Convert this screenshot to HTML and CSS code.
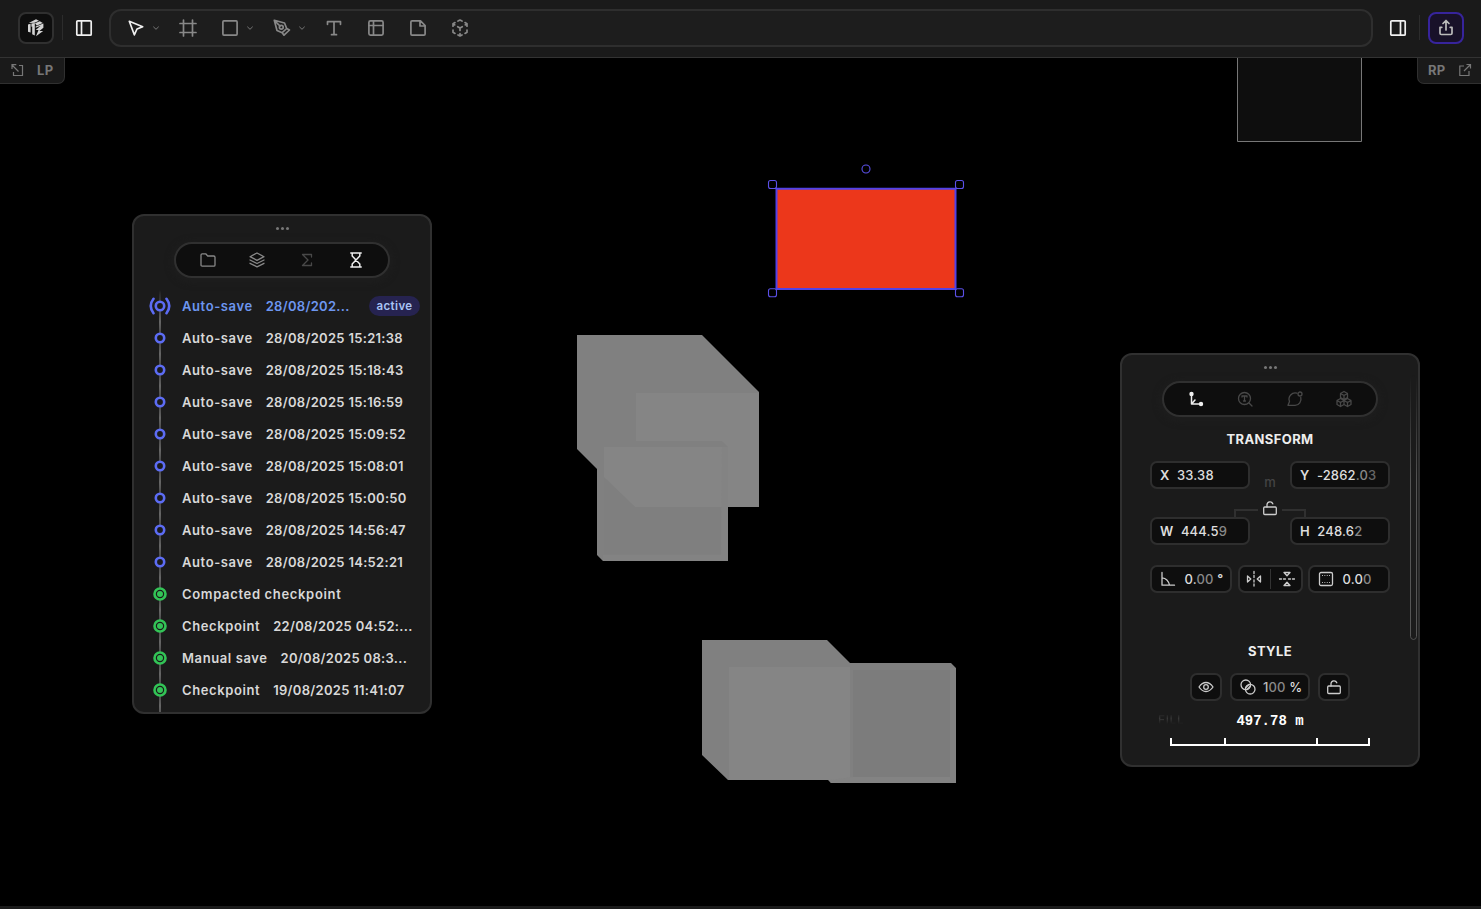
FILE: index.html
```
<!DOCTYPE html>
<html lang="en">
<head>
<meta charset="utf-8">
<title>Design editor</title>
<link rel="stylesheet" href="styles.css">
</head>
<body>
<header class="topbar">
  <button class="logo"><svg width="20" height="20" viewBox="0 0 20 20"><path fill="#d4d4d4" d="M2 6.500 4.600 5.800V14.500L2 13.800zM5.400 5.600 8.800 5v12.400L6.200 16.200V8.500l-.8.200zM2.800 5 10 1.300l3 1.500-4.500 2zM9 5.300l4.800-2.100L16.800 5l-6 2.400zM9.700 8.600l7.700-3v4.200L13.400 13h3.800l-7.200 5.300 2.500-6.300H9.700l5-4.200-5 2z"/></svg></button>
  <i class="rule"></i>
  <button class="toggle"><svg class="ic bright" width="20" height="20" viewBox="0 0 20 20"><rect x="2.800" y="2.800" width="14.400" height="14.400" rx="1"/><path d="M7.500 3v14"/></svg></button>
  <nav class="tools">
    <svg class="ic bright" width="20" height="20" viewBox="0 0 20 20"><path d="m3.300 3.300 13.400 5.400-5.700 2.300-2.700 5.800z"/></svg>
    <svg class="chev" viewBox="0 0 8 8"><path d="m1.300 2.700 2.700 2.600 2.700-2.600"/></svg>
    <svg class="ic frame" width="20" height="20" viewBox="0 0 20 20"><path d="M5.500 2v16M14.500 2v16M2 5.500h16M2 14.500h16"/></svg>
    <svg class="ic" width="20" height="20" viewBox="0 0 20 20"><rect x="2.900" y="2.900" width="14.200" height="14.200" rx="1"/></svg>
    <svg class="chev" viewBox="0 0 8 8"><path d="m1.300 2.700 2.700 2.600 2.700-2.600"/></svg>
    <svg class="ic" width="20" height="20" viewBox="0 0 20 20"><path d="M2.300 2.300 12.500 5l2.200 5.500-4.500 4.200L5 12.500zM2.300 2.300 8 8M10.200 14.700l1.800 2.500 5.500-5.200-2.800-1.500"/><circle cx="9.300" cy="9.300" r="1.900"/></svg>
    <svg class="chev" viewBox="0 0 8 8"><path d="m1.300 2.700 2.700 2.600 2.700-2.600"/></svg>
    <svg class="ic" width="20" height="20" viewBox="0 0 20 20"><path d="M3.500 6.300V3.700h13v2.600M10 3.700v13M7.500 16.700h5"/></svg>
    <svg class="ic" width="20" height="20" viewBox="0 0 20 20"><rect x="2.900" y="2.900" width="14.200" height="14.200" rx="1.500"/><path d="M7.500 3v14M3 7.500h14"/></svg>
    <svg class="ic" width="20" height="20" viewBox="0 0 20 20"><path d="M4 2.900h8.500L17.100 7.500V16q0 1.100-1.100 1.100H4q-1.100 0-1.100-1.100V4q0-1.100 1.100-1.100zM12 3v5h5"/></svg>
    <svg class="ic" width="20" height="20" viewBox="0 0 20 20"><path d="M8 3 10 2l2 1M15 4.600 17 5.800v2.400M17 12v2.200l-2 1.200M12 17l-2 1-2-1M5 15.400l-2-1.200V12M3 8.200V5.800l2-1.200M7.700 8.700 10 10l2.300-1.300M10 10v2.500M10 15.500V18M3 5.800l1.800 1.100M17 5.800l-1.800 1.100"/></svg>
  </nav>
  <button class="toggle"><svg class="ic bright" width="20" height="20" viewBox="0 0 20 20"><rect x="2.800" y="2.800" width="14.400" height="14.400" rx="1"/><path d="M12.500 3v14"/></svg></button>
  <i class="rule"></i>
  <button class="logo share"><svg class="ic" width="20" height="20" viewBox="0 0 20 20"><path d="M10 12V3.200M7 5.500l3-3 3 3M5.800 9.300H4v5.900q0 1.300 1.300 1.300h9.400q1.300 0 1.300-1.300V9.300h-1.800"/></svg></button>
</header>
<main class="stage">
  <svg class="canvas" width="1481" height="851" viewBox="0 58 1481 851">
    <path fill="#0e0e0e" stroke="#777" d="M1237.500 50v91.500h124V50"/>
    <g>
      <path fill="#808080" d="M577 335h125l57 57v115h-31v54H603l-6-6v-86l-20-20z"/>
      <path fill="#858585" d="M636 393h123v114h-31v-60l-6-6h-86z"/>
      <path fill="#858585" d="M604 447h118v60h-87l-31-30z"/>
      <path fill="#7f7f7f" d="M604 478l31 29h86v47H604z"/>
      <path fill="#838383" d="M722 447h6v114H603v-6h118z"/>
    </g>
    <g>
      <path fill="#808080" d="M702 640h125l23 23h101l5 5v115H831l-3-3H728l-26-25z"/>
      <path fill="#858585" d="M729 667h121v113H729z"/>
      <path fill="#7c7c7c" d="M853 670h97v107h-97z"/>
      <path fill="#838383" d="M950 668h6v115H831l-2-3 24-3h97z"/>
    </g>
    <path fill="#ec371b" stroke="#5142e8" stroke-width="2" d="M776.500 188.800h179v100.200h-179z"/>
    <g fill="none" stroke="#5b50e8" stroke-width="1.100"><rect x="768.500" y="180.500" width="8" height="8" rx="2"/><rect x="955.500" y="180.500" width="8" height="8" rx="2"/><rect x="768.500" y="288.800" width="8" height="8" rx="2"/><rect x="955.500" y="288.800" width="8" height="8" rx="2"/><circle cx="866" cy="169" r="4"/></g>
  </svg>
  <div class="tab lp"><svg class="tic" viewBox="0 0 14 14"><path d="M2 6V1.700h4.300M2 2l6.500 6.500M9 2.500h3.500v10h-9V9"/></svg><span>LP</span></div>
  <div class="tab rp"><span>RP</span><svg class="tic" viewBox="0 0 14 14"><path d="M8.500 1.500h4v4M12.500 1.500 6 8M6 3H1.800v9.500H11V8"/></svg></div>

  <section class="panel history">
    <div class="grip"><i></i><i></i><i></i></div>
    <div class="pill">
      <svg class="pic" viewBox="0 0 18 18"><path d="M2 4q0-1.200 1.200-1.200h3.500l2 2.200h6Q16 5 16 6.200V14q0 1.200-1.200 1.200H3.200Q2 15.200 2 14z"/></svg>
      <svg class="pic" viewBox="0 0 18 18"><path d="m9 2 7 3.700-7 3.600-7-3.600zM2 9l7 3.500L16 9M2 12.300l7 3.500 7-3.500"/></svg>
      <svg class="pic off" viewBox="0 0 18 18"><path d="M13.500 6V3.500h-9L10 9l-5.500 5.500h9V12"/></svg>
      <svg class="pic on" viewBox="0 0 18 18"><path d="M3.800 2h10.400M3.800 16h10.400M5.200 2v3l7.600 8v3M12.800 2v3l-7.600 8v3"/></svg>
    </div>
    <ul class="log">
      <li class="cur"><svg class="dot" viewBox="0 0 24 24"><circle cx="12" cy="12" r="4.200"/><path d="M5.500 4.800q-5.500 7.200 0 14.400M18.500 4.800q5.500 7.200 0 14.400"/></svg><b>Auto-save</b><time class="cut">28/08/202...</time><em>active</em></li>
      <li><svg class="dot" viewBox="0 0 24 24"><circle cx="12" cy="12" r="4.200"/></svg><b>Auto-save</b><time>28/08/2025 15:21:38</time></li>
      <li><svg class="dot" viewBox="0 0 24 24"><circle cx="12" cy="12" r="4.200"/></svg><b>Auto-save</b><time>28/08/2025 15:18:43</time></li>
      <li><svg class="dot" viewBox="0 0 24 24"><circle cx="12" cy="12" r="4.200"/></svg><b>Auto-save</b><time>28/08/2025 15:16:59</time></li>
      <li><svg class="dot" viewBox="0 0 24 24"><circle cx="12" cy="12" r="4.200"/></svg><b>Auto-save</b><time>28/08/2025 15:09:52</time></li>
      <li><svg class="dot" viewBox="0 0 24 24"><circle cx="12" cy="12" r="4.200"/></svg><b>Auto-save</b><time>28/08/2025 15:08:01</time></li>
      <li><svg class="dot" viewBox="0 0 24 24"><circle cx="12" cy="12" r="4.200"/></svg><b>Auto-save</b><time>28/08/2025 15:00:50</time></li>
      <li><svg class="dot" viewBox="0 0 24 24"><circle cx="12" cy="12" r="4.200"/></svg><b>Auto-save</b><time>28/08/2025 14:56:47</time></li>
      <li><svg class="dot" viewBox="0 0 24 24"><circle cx="12" cy="12" r="4.200"/></svg><b>Auto-save</b><time>28/08/2025 14:52:21</time></li>
      <li class="saved"><svg class="dot" viewBox="0 0 24 24"><circle cx="12" cy="12" r="5.500"/><circle class="core" cx="12" cy="12" r="3"/></svg><b class="wide">Compacted checkpoint</b></li>
      <li class="saved"><svg class="dot" viewBox="0 0 24 24"><circle cx="12" cy="12" r="5.500"/><circle class="core" cx="12" cy="12" r="3"/></svg><b>Checkpoint</b><time>22/08/2025 04:52:...</time></li>
      <li class="saved"><svg class="dot" viewBox="0 0 24 24"><circle cx="12" cy="12" r="5.500"/><circle class="core" cx="12" cy="12" r="3"/></svg><b>Manual save</b><time>20/08/2025 08:3...</time></li>
      <li class="saved"><svg class="dot" viewBox="0 0 24 24"><circle cx="12" cy="12" r="5.500"/><circle class="core" cx="12" cy="12" r="3"/></svg><b>Checkpoint</b><time>19/08/2025 11:41:07</time></li>
    </ul>
  </section>

  <section class="panel props">
    <div class="grip"><i></i><i></i><i></i></div>
    <div class="pill">
      <svg class="pic on" viewBox="0 0 18 18"><path d="M4.500 4v10H14M4.500 14 8 10"/><path class="solid" d="M4.500 1.800a2.200 2.200 0 1 1 0 4.400 2.200 2.200 0 0 1 0-4.400zM14 11.800a2.200 2.200 0 1 1 0 4.400 2.200 2.200 0 0 1 0-4.400z"/></svg>
      <svg class="pic off" viewBox="0 0 18 18"><circle cx="8.500" cy="8.500" r="6"/><path d="m13 13 3 3M6 7V6h5v1M8.500 6v5M7.500 11h2"/></svg>
      <svg class="pic off" viewBox="0 0 18 18"><path d="M11 3.200A6.200 6.200 0 0 0 3.500 11.500L2 15.300H9A6.200 6.200 0 0 0 14.800 7.500"/><circle cx="14" cy="4" r="2"/></svg>
      <svg class="pic off" viewBox="0 0 18 18"><path d="m9 1.500 3.500 2v4L9 9.500l-3.500-2v-4zM5.500 8.500l3.500 2v4l-3.500 2-3.500-2v-4zM12.500 8.500l3.500 2v4l-3.500 2-3.500-2v-4zM5.500 3.500 9 5.500l3.500-2M9 5.500v4M2 10.500l3.500 2 3.500-2M5.500 12.500v4M9 10.500l3.500 2 3.500-2M12.500 12.500v4"/></svg>
    </div>
    <h2>TRANSFORM</h2>
    <div class="row pos"><label class="field"><b>X</b><span>33.38</span></label><span class="unit">m</span><label class="field"><b>Y</b><span>-2862<s>.0</s><s class="dim">3</s></span></label></div>
    <div class="link"><i class="l"></i><svg class="pic lock" viewBox="0 0 18 18"><rect x="2.700" y="8" width="12.600" height="7.500" rx="1"/><path d="M6 8V5.500a3 3 0 0 1 5.800-.7"/></svg><i class="r"></i></div>
    <div class="row"><label class="field"><b>W</b><span>444.5<s>9</s></span></label><label class="field"><b>H</b><span>248.6<s>2</s></span></label></div>
    <div class="row third">
      <label class="field sm"><svg class="pic lit" viewBox="0 0 18 18"><path d="M3 2.500v12.700h12.500M3 7.800q6 .5 7.500 7.400"/></svg><span>0.<s>00</s> <b>°</b></span></label>
      <div class="field flip"><svg class="pic lit" viewBox="0 0 18 18"><path d="M9 1.500v2M9 5.500v2M9 10v2M9 14v2M2.500 6v6l3.300-3zM15.500 6v6l-3.300-3z"/></svg><i></i><svg class="pic lit" viewBox="0 0 18 18"><path d="M1.500 9h2M5.500 9h2M10.500 9h2M14.500 9h2M6 2.500h6L9 5.800zM6 15.500h6l-3-3.300z"/></svg></div>
      <label class="field sm"><svg class="pic lit" viewBox="0 0 18 18"><rect x="2.500" y="2.500" width="13" height="13" rx="1.500"/><path stroke-width="1" d="M5.500 5.500h.1M7.800 5.500h.1M10.200 5.500h.1M12.500 5.500h.1M5.500 12.500h.1M7.800 12.500h.1M10.200 12.500h.1M12.500 12.500h.1"/></svg><span>0.0<s>0</s></span></label>
    </div>
    <h2 class="style">STYLE</h2>
    <div class="row styles">
      <div class="field box"><svg class="pic lit" viewBox="0 0 18 18"><path d="M2 9q3-4.500 7-4.500T16 9q-3 4.500-7 4.500T2 9z"/><circle cx="9" cy="9" r="2.300"/></svg></div>
      <div class="field opacity"><svg class="pic lit" viewBox="0 0 18 18"><circle cx="6.800" cy="6.800" r="4.800"/><circle cx="11.200" cy="11.200" r="4.800"/><path d="m6.500 10 3.500-3.500M8 11.500 11.500 8"/></svg><span><s class="mid">1</s><s>00</s> %</span></div>
      <div class="field box"><svg class="pic lit" viewBox="0 0 18 18"><rect x="2.700" y="8" width="12.600" height="7.500" rx="1"/><path d="M6 8V5.500a3 3 0 0 1 5.800-.7"/></svg></div>
    </div>
    <div class="foot"><span class="fill">FILL</span><span class="scale">497.78 m</span></div>
    <div class="ruler"><i></i><i></i><i></i></div>
    <i class="scroll"></i>
  </section>
</main>
</body>
</html>
```
FILE: styles.css
```
* { box-sizing: border-box; }
body { margin: 0; width: 1481px; height: 909px; overflow: hidden; background: #000; color: #ddd; font: 500 13px/16px Inter, sans-serif; display: flex; flex-direction: column; }
button { padding: 0; border: 0; background: none; display: flex; align-items: center; justify-content: center; }
svg { flex: none; display: block; }
.topbar { height: 58px; padding: 0 17px 2px 18px; background: #1a1a1a; border-bottom: 1px solid #333; display: flex; align-items: center; flex: none; }
.logo { width: 36px; height: 32px; border: 2px solid #303030; border-radius: 8px; background: #0e0e0e; }
.share { background: #181129; border-color: #37249c; }
.share .ic { stroke: #bbb; }
.rule { width: 1px; height: 25px; background: #2c2c2c; margin: 0 3px 0 8px; }
.toggle { width: 36px; height: 32px; margin: 0 7px 0 0; }
.tools { flex: 1; height: 38px; padding-left: 15px; border: 2px solid #2e2e2e; border-radius: 12px; background: #1d1d1d; display: flex; align-items: center; gap: 22px; }
.tools + .toggle { margin: 0 3px 0 7px; }
.toggle + .rule { margin: 0 8px 0 0; }
.ic { fill: none; stroke: #888; stroke-width: 1.700; stroke-linejoin: round; stroke-linecap: round; }
.bright { stroke: #f0f0f0; }
.chev { width: 8px; height: 8px; margin: 0 -4px 0 -16px; fill: none; stroke: #777; }
.stage { flex: 1; position: relative; border-bottom: 3px solid #1b1b1b; }
.canvas { position: absolute; inset: 0; }
.tab { position: absolute; top: 0; height: 26px; padding-bottom: 1px; background: #1a1a1a; border: 1px solid #303030; border-top: 0; display: flex; align-items: center; font-weight: 700; letter-spacing: .3px; color: #777; }
.lp { left: 0; width: 65px; border-left: 0; border-radius: 0 0 7px 0; padding-left: 10px; gap: 13px; }
.rp { right: 0; width: 64px; border-right: 0; border-radius: 0 0 0 7px; padding-left: 10px; gap: 12px; }
.tic { width: 14px; height: 14px; fill: none; stroke: #777; stroke-width: 1.200; }
.panel { position: absolute; width: 300px; background: #1b1b1b; border: 2px solid #303030; border-radius: 12px; display: flex; flex-direction: column; overflow: hidden; }
.history { left: 132px; top: 156px; height: 500px; }
.props { left: 1120px; top: 295px; height: 414px; align-items: center; }
.grip { display: flex; justify-content: center; gap: 2px; padding: 10.500px 0 12px; height: 26px; }
.grip i { width: 3px; height: 3px; border-radius: 50%; background: #777; }
.pill { width: 216px; height: 36px; flex: none; margin: 0 auto; border: 2px solid #303030; border-radius: 18px; background: #0e0e0e; display: flex; align-items: center; justify-content: space-between; padding: 0 23px; box-shadow: 0 2px 7px 2px #1e1e1e; }
.pic { width: 18px; height: 18px; fill: none; stroke: #888; stroke-width: 1.300; stroke-linejoin: round; stroke-linecap: round; }
.off { stroke: #484848; }
.on { stroke: #eee; stroke-width: 1.500; }
.solid { fill: #eee; stroke: none; }
.lit { stroke: #ccc; }
.log { list-style: none; margin: 12px 0 0; padding: 0; position: relative; height: 422px; background: linear-gradient(#1b1b1b, transparent 20px), repeating-linear-gradient(#666 0, #3c3c3c 16px, #666 32px); background-size: 2px 100%; background-position: 25px 0; background-repeat: no-repeat; }
.log li { height: 32px; padding-left: 14px; display: flex; align-items: center; white-space: pre; font-weight: 600; color: #d8d8d8; }
.dot { width: 24px; height: 24px; margin-right: 10px; fill: #1b1b1b; stroke: #5c6cf4; stroke-width: 2.600; stroke-linecap: round; }
.dot path { fill: none; }
.saved .dot { stroke: #32c456; }
.dot .core { fill: #32c456; stroke: none; }
.log b { font-weight: 600; margin-right: 13px; letter-spacing: .6px; }
.log .wide { letter-spacing: .660px; }
.log time { letter-spacing: .3px; }
.log .cur { color: #6d96ef; }
.log em { margin: 0 10px 0 auto; height: 20px; width: 51px; text-align: center; border-radius: 10px; background: #262350; color: #a9c3f5; font: 600 11.500px/20px Inter, sans-serif; letter-spacing: .4px; }
h2 { margin: 14px 0; font: 700 13px/16px Inter, sans-serif; letter-spacing: .4px; color: #eee; }
.row { width: 240px; display: flex; justify-content: space-between; align-items: center; position: relative; }
.field { height: 28px; width: 100px; border: 2px solid #2e2e2e; border-radius: 7px; background: #0e0e0e; padding: 0 8px; display: flex; align-items: center; gap: 7.500px; white-space: pre; letter-spacing: .15px; }
.field b { font-weight: 600; }
s { text-decoration: none; color: #888; }
.mid { color: #bbb; }
.dim { color: #666; }
.unit { color: #444; height: 28px; padding-top: 13px; }
.link { width: 72px; height: 28px; display: flex; justify-content: space-between; align-items: flex-end; }
.link i { width: 24px; height: 8px; border-top: 2px solid #303030; }
.link .l { border-left: 2px solid #303030; }
.link .r { border-right: 2px solid #303030; }
.lock { align-self: flex-start; margin-top: 10px; stroke: #ccc; }
.third { margin-top: 20px; }
.sm { width: 82px; padding: 0 7px; }
.flip { width: 65px; gap: 7px; padding: 0 5px; }
.flip i { width: 1px; height: 20px; background: #333; }
.style { margin: 50px 0 14px; }
.styles { width: 160px; }
.box { width: 32px; padding: 0; justify-content: center; }
.opacity { width: 80px; padding: 0 7px; gap: 6px; }
.foot { width: 240px; height: 20px; margin-top: 9px; position: relative; text-align: center; line-height: 20px; }
.fill { position: absolute; left: 8px; top: 0; font-size: 12px; letter-spacing: .6px; color: transparent; background: linear-gradient(#1b1b1b 20%, #383838 42%, #1b1b1b 70%); background-clip: text; }
.scale { font: 700 14px/20px "Liberation Mono", monospace; color: #fff; }
.ruler { width: 200px; height: 8px; margin-top: 8px; border: 2px solid #fff; border-top: 0; display: grid; grid-template-columns: 52px 92px 1fr; }
.ruler i + i { border-left: 2px solid #fff; }
.scroll { position: absolute; right: 1px; top: 20px; width: 7px; height: 265px; border-radius: 4px; border: 1px solid #555; -webkit-mask: linear-gradient(transparent, #000 40%); mask: linear-gradient(transparent, #000 40%); }
```
